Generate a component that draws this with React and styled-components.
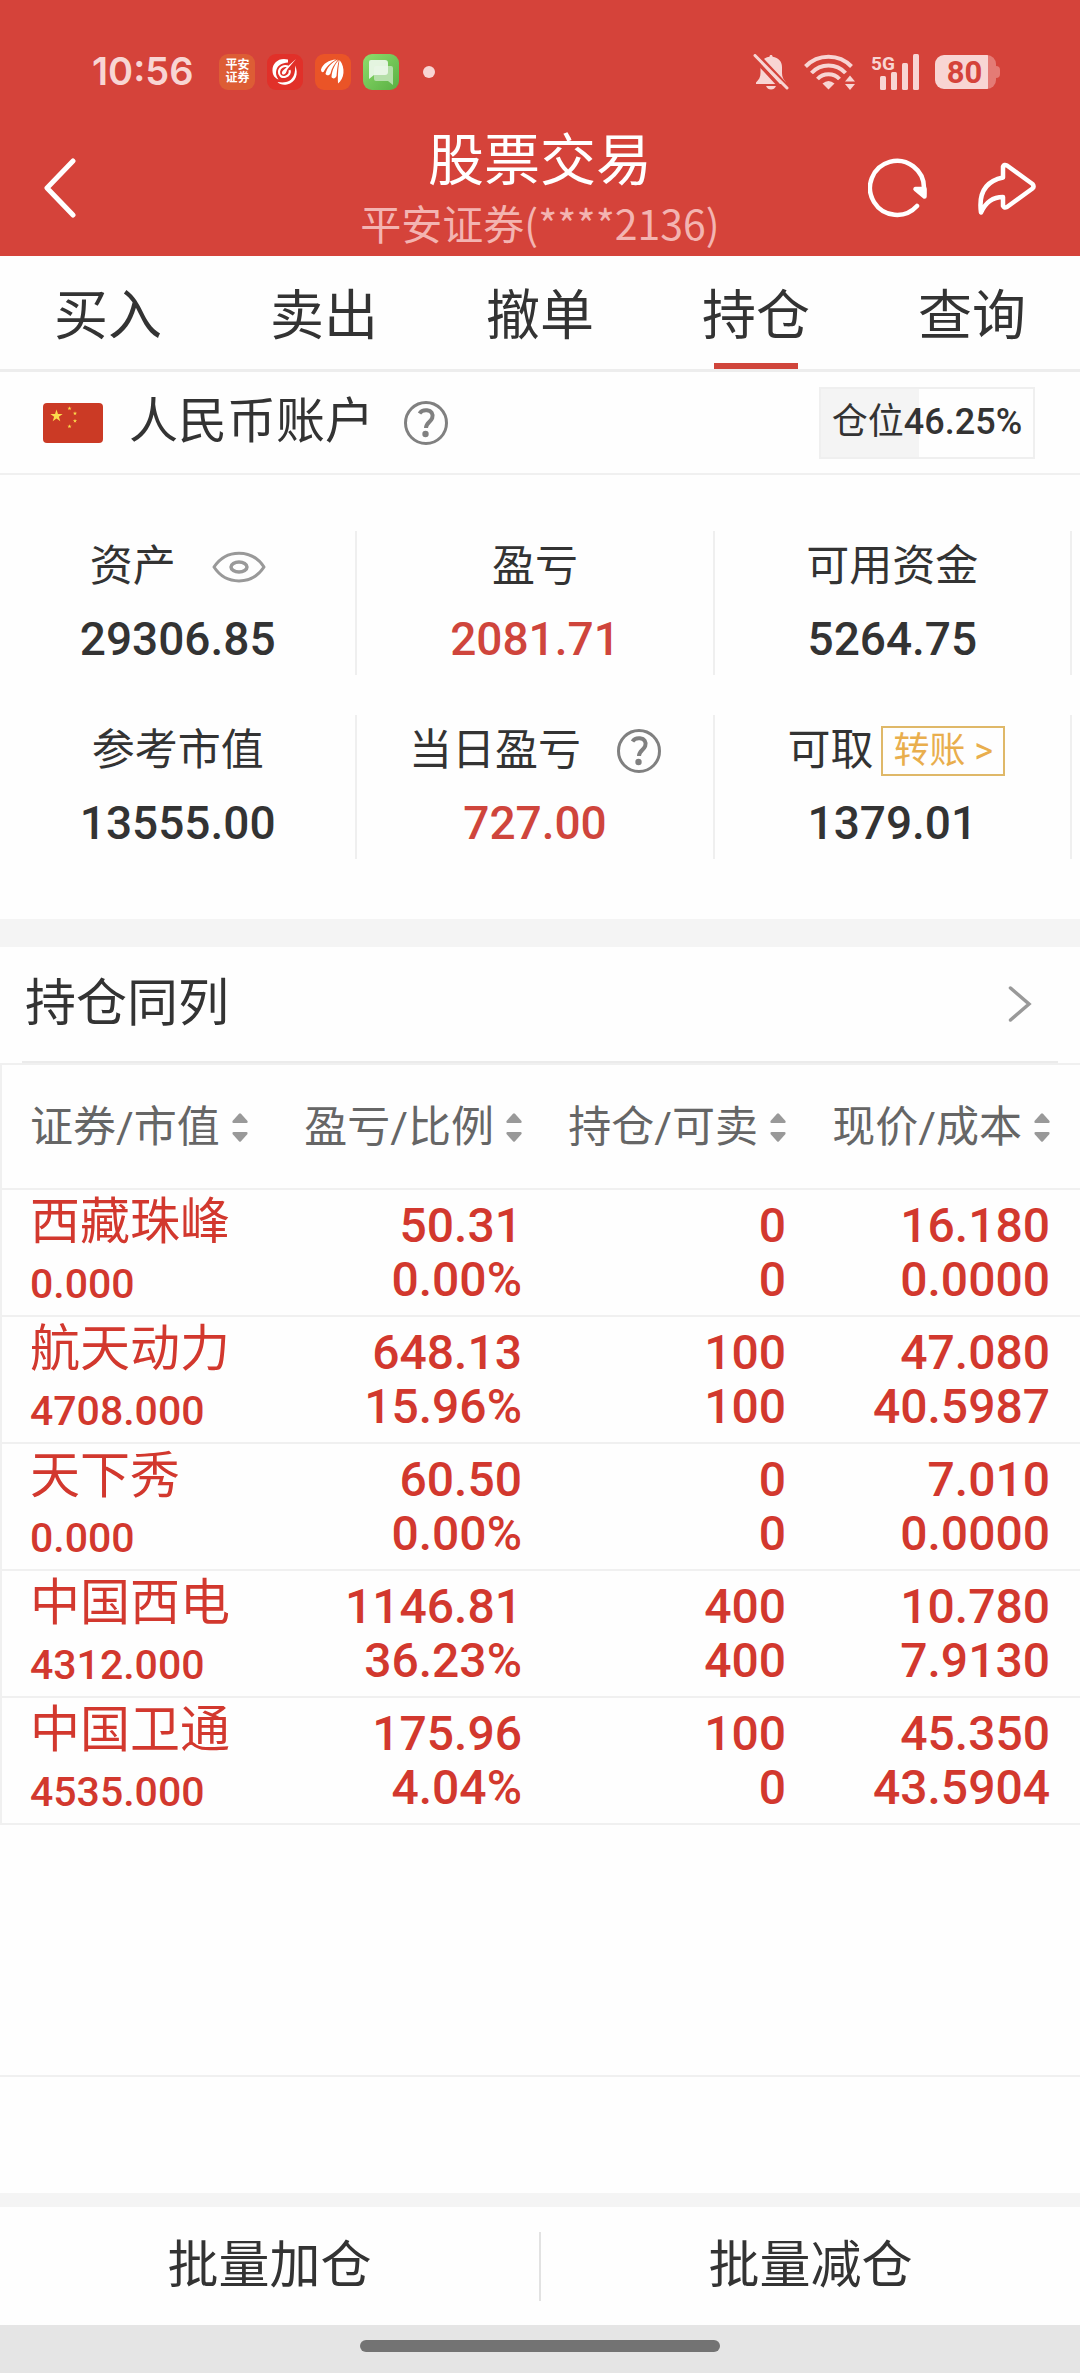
import { useState } from "react";
import styled, { createGlobalStyle } from "styled-components";

const GlobalStyle = createGlobalStyle`
  * {
    box-sizing: border-box;
  }
  body {
    margin: 0;
    background: #fefefe;
    color: #333;
    font-family: Roboto, "Noto Sans CJK SC", sans-serif;
    line-height: 1.2;
  }
  button {
    margin: 0;
    padding: 0;
    border: none;
    background: none;
    color: inherit;
    font-family: inherit;
    line-height: inherit;
    cursor: pointer;
  }
  svg {
    display: block;
    flex: none;
  }
`;

const Page = styled.div`
  display: flex;
  flex-direction: column;
  min-height: 100vh;
`;

const Header = styled.header`
  background: #d5433a;
  color: white;
`;

const StatusBar = styled.div`
  display: flex;
  align-items: center;
  justify-content: space-between;
  height: 120px;
  padding: 24px 80px 0 92px;
  color: #f8d5d3;
`;

const StatusGroup = styled.div`
  display: flex;
  align-items: center;
  gap: ${(props) => props.$gap}px;
`;

const Clock = styled.span`
  margin-right: 14px;
  font-family: Inter, sans-serif;
  font-size: 38px;
  font-weight: 600;
`;

const AppBadge = styled.span`
  display: flex;
  flex-direction: column;
  align-items: center;
  justify-content: center;
  width: 36px;
  height: 36px;
  border-radius: 9px;
  background: ${(props) => props.$bg};
  color: white;
  font-size: 12px;
  font-weight: 700;
  line-height: 13px;
`;

const Dot = styled.span`
  width: 12px;
  height: 12px;
  margin-left: 12px;
  border-radius: 50%;
  background: #f8d5d3;
`;

const Battery = styled.span`
  display: flex;
  align-items: center;
`;

const BatteryBody = styled.span`
  width: 61px;
  height: 34px;
  padding-right: 2px;
  border-radius: 9px;
  background: linear-gradient(to right, #f8d5d3 53px, #e47b75 53px);
  color: #d5433a;
  font-size: 31px;
  font-weight: 700;
  line-height: 36px;
  text-align: center;
`;

const BatteryTip = styled.span`
  width: 4px;
  height: 12px;
  border-radius: 0 4px 4px 0;
  background: #e47b75;
`;

const TitleBar = styled.div`
  display: grid;
  grid-template-columns: 1fr auto 1fr;
  align-items: center;
  height: 136px;
  padding: 0 44px;
`;

const TitleBlock = styled.div`
  padding-top: 8px;
  text-align: center;
`;

const Title = styled.h1`
  margin: 0;
  font-size: 56px;
  font-weight: 400;
  line-height: 60px;
`;

const Subtitle = styled.p`
  margin: 0;
  color: #f3b4b1;
  font-family: "Noto Sans CJK SC", sans-serif;
  font-size: 41px;
  line-height: 62px;
`;

const Actions = styled.div`
  display: flex;
  justify-content: flex-end;
  gap: 48px;
`;

const Tabs = styled.nav`
  display: flex;
  border-bottom: 3px solid #ededed;
`;

const Tab = styled.button`
  display: flex;
  flex: 1;
  flex-direction: column;
  align-items: center;
  justify-content: space-between;
  height: 113px;
  padding-top: 25px;
  font-size: 54px;
  line-height: 72px;

  &::after {
    content: "";
    width: 84px;
    height: 6px;
    background: ${(props) => (props.$active ? "#d0453b" : "transparent")};
  }
`;

const AccountRow = styled.div`
  display: flex;
  align-items: center;
  height: 103px;
  padding: 0 45px 0 43px;
  border-bottom: 2px solid #f0f0f0;
`;

const AccountName = styled.span`
  margin: 0 30px 0 26px;
  font-size: 49px;
`;

const PositionBox = styled.div`
  width: 216px;
  height: 72px;
  margin-left: auto;
  border: 2px solid #efefef;
  background: linear-gradient(
    to right,
    #f4f4f4 ${(props) => props.$percent}%,
    #fefefe ${(props) => props.$percent}%
  );
  font-size: 36px;
  line-height: 66px;
  text-align: center;
  white-space: nowrap;
`;

const Percent = styled.span`
  font-weight: 500;
`;

const Stats = styled.div`
  display: grid;
  grid-template-columns: repeat(3, 1fr);
  row-gap: 40px;
  padding: 56px 8px 60px 0;
`;

const Stat = styled.div`
  border-right: 2px solid #efefef;
`;

const StatLabel = styled.div`
  display: flex;
  align-items: center;
  justify-content: center;
  gap: 36px;
  height: 72px;
  font-size: 43px;
`;

const StatValue = styled.div`
  color: ${(props) => (props.$up ? "#cf453c" : "#333")};
  font-size: 46px;
  font-weight: 500;
  line-height: 72px;
  text-align: center;
`;

const TransferButton = styled.button`
  height: 50px;
  margin: 0 -8px 0 -28px;
  padding: 0 10px;
  border: 2px solid #dfb868;
  color: #e9ae4d;
  font-size: 36px;
  line-height: 46px;
  white-space: nowrap;
`;

const Band = styled.div`
  height: ${(props) => props.$height}px;
  background: #f4f4f4;
`;

const SectionHead = styled.button`
  display: flex;
  align-items: center;
  justify-content: space-between;
  height: 116px;
  margin: 0 22px;
  padding: 0 26px 0 3px;
  border-bottom: 2px solid #ebebeb;
  font-size: 51px;
`;

const Table = styled.table`
  width: 100%;
  border-collapse: separate;
  border-spacing: 0;
  border-top: 2px solid #f0f0f0;
  border-left: 2px solid #f0f0f0;
  table-layout: fixed;
`;

const HeadCell = styled.th`
  width: ${(props) => (props.$first ? "auto" : "264px")};
  height: 125px;
  padding: ${(props) => (props.$first ? "2px 0 0 28px" : "2px 30px 0 0")};
  border-bottom: 2px solid #f0f0f0;
  font-weight: 400;
`;

const SortButton = styled.button`
  display: flex;
  align-items: center;
  gap: 12px;
  margin-left: ${(props) => (props.$first ? "0" : "auto")};
  color: #666;
  font-size: 43px;
  white-space: nowrap;
`;

const Cell = styled.td`
  height: 127px;
  padding: ${(props) => (props.$first ? "0 0 0 28px" : "0 30px 0 0")};
  border-bottom: 2px solid #f0f0f0;
  color: #d2382e;
  font-size: 48px;
  font-weight: 500;
  line-height: 54px;
  text-align: ${(props) => (props.$first ? "left" : "right")};
`;

const StockName = styled.div`
  font-size: 50px;
  font-weight: 400;
  line-height: 62px;
`;

const StockValue = styled.div`
  font-size: 41px;
  line-height: 62px;
`;

const Rest = styled.div`
  flex: 1;
  border-bottom: 2px solid #f0f0f0;
`;

const Notice = styled.div`
  height: 116px;
`;

const Footer = styled.footer`
  display: flex;
  align-items: center;
  height: 118px;
`;

const FooterButton = styled.button`
  flex: 1;
  height: 69px;
  font-size: 51px;
  line-height: 66px;

  & + & {
    border-left: 2px solid #e2e2e2;
  }
`;

const HomeBar = styled.div`
  display: flex;
  justify-content: center;
  height: 48px;
  padding-top: 15px;
  background: #e5e5e5;

  &::after {
    content: "";
    width: 33.33%;
    height: 12px;
    border-radius: 6px;
    background: #737373;
  }
`;

const tabs = ["买入", "卖出", "撤单", "持仓", "查询"];

const columns = ["证券/市值", "盈亏/比例", "持仓/可卖", "现价/成本"];

const holdings = [
  { name: "西藏珠峰", value: "0.000", profit: "50.31", ratio: "0.00%", held: "0", sellable: "0", price: "16.180", cost: "0.0000" },
  { name: "航天动力", value: "4708.000", profit: "648.13", ratio: "15.96%", held: "100", sellable: "100", price: "47.080", cost: "40.5987" },
  { name: "天下秀", value: "0.000", profit: "60.50", ratio: "0.00%", held: "0", sellable: "0", price: "7.010", cost: "0.0000" },
  { name: "中国西电", value: "4312.000", profit: "1146.81", ratio: "36.23%", held: "400", sellable: "400", price: "10.780", cost: "7.9130" },
  { name: "中国卫通", value: "4535.000", profit: "175.96", ratio: "4.04%", held: "100", sellable: "0", price: "45.350", cost: "43.5904" },
];

const BellOffIcon = () => (
  <svg width="36" height="36" viewBox="0 0 36 36" fill="#f8d5d3">
    <path d="M18 1c1 0 1.600.7 1.600 1.700C25.500 3.500 29 7.500 29 13v6c0 4 1.500 6.500 4 9.500V30H3v-1.500c3-3 4.500-5.500 4.500-9.500v-6c0-5.500 3.200-9.500 9-10.300C16.500 1.700 17 1 18 1z" />
    <path d="M13 32h10c-1 2.500-2.800 3.500-5 3.500S14 34.500 13 32z" />
    <path d="M0 3.500 32 38M3-1l34 36" stroke="#d5433a" strokeWidth="3.500" />
    <path d="M0-4 0 6 8 12z" fill="#d5433a" />
    <path d="M2 1.500 34 34" stroke="#f8d5d3" strokeWidth="3" strokeLinecap="round" />
  </svg>
);

const WifiIcon = () => (
  <svg width="51" height="36" viewBox="0 0 51 36" fill="none" stroke="#f8d5d3" strokeWidth="4">
    <path d="M1.500 12.500a32 32 0 0 1 46 0M7.500 19a23 23 0 0 1 34 0M13.500 25a15 15 0 0 1 22 0" />
    <path d="M24.500 35.500 18.500 29.500q6-5 12 0z" fill="#f8d5d3" stroke="none" />
    <path d="M46 21.500l5 6H41zM46 36l5-6H41z" fill="#f8d5d3" stroke="none" />
  </svg>
);

const SignalIcon = () => (
  <svg width="50" height="40" viewBox="0 0 50 40" fill="#f8d5d3">
    <text x="1" y="18" fontFamily="Roboto, sans-serif" fontSize="19" fontWeight="700">5G</text>
    <rect x="10" y="24" width="6" height="14" rx="1.500" />
    <rect x="21" y="20" width="6" height="18" rx="1.500" />
    <rect x="32" y="11" width="6" height="27" rx="1.500" />
    <rect x="43" y="2" width="6" height="36" rx="1.500" />
  </svg>
);

const SwirlIcon = () => (
  <svg width="28" height="28" viewBox="0 0 28 28" fill="white">
    <path d="M17 1.500C8-1 1 5 1.500 13c.2 4.500 2.500 7 6 8.500C5 18 4.500 15 5.500 11.500 7 7 11 5 17 4.500z" />
    <path d="M24 7.500c4 8 1 17-8 19-4 .8-7.500-.2-9.500-2.500 8 1.500 14-.5 16.500-7 1-3 1.300-6 1-9.500z" />
    <path
      d="M17 8.500c-4-1.500-8.500.8-9 5-.4 4 3 6.300 6.500 5.200 3.500-1 5-4 4-6.500"
      fill="none"
      stroke="white"
      strokeWidth="2.200"
    />
    <path d="M25 1 12 12.500c-2 2-1 4.500 1 4 2.500-1 2-3 4-6z" />
  </svg>
);

const FeatherIcon = () => (
  <svg width="26" height="28" viewBox="0 0 26 28" fill="white">
    <path d="M16 1.500C9 2 3 5.500 1 11.500c0 2 1 3 2.500 2.500C6 9 10 5 16 1.500z" />
    <path d="M18 1.500C11 5 7 9.500 5.500 16c1.500 2 4 1.500 5-.5 1-5 4-9.500 7.500-14z" />
    <path d="M19 2c-4 4-7 10-7.500 17 1.500 2.500 4 1.500 5-1 .5-6 1-11 2.500-16z" />
    <path d="M19.500 2c-1 6-2 15-1.500 23.500C24 21 26 10 19.500 2z" />
  </svg>
);

const ChatIcon = () => (
  <svg width="36" height="36" viewBox="0 0 36 36">
    <path d="M13 12h15q2 0 2 2v17l-5-4H13q-2 0-2-2V14q0-2 2-2z" fill="#b5dfa9" />
    <path d="M8 6h14q3 0 3 3v9q0 3-3 3H11l-5 4V8q0-2 2-2z" fill="#ecf8e9" fillOpacity="0.93" />
  </svg>
);

const BackIcon = () => (
  <svg width="32" height="60" viewBox="0 0 32 60" fill="none" stroke="white" strokeWidth="5">
    <path d="M29 3 3 30 29 57" strokeLinecap="round" strokeLinejoin="round" />
  </svg>
);

const RefreshIcon = () => (
  <svg width="60" height="60" viewBox="0 0 60 60" fill="none" stroke="white" strokeWidth="4.500">
    <path d="M56 36V30A27 27 0 1 0 49 48" strokeLinecap="round" />
    <path d="M47.500 31h9v7.500z" fill="white" strokeLinejoin="round" />
  </svg>
);

const ShareIcon = () => (
  <svg width="60" height="60" viewBox="0 0 60 60" fill="none" stroke="white" strokeWidth="4.500">
    <path
      d="M27 8.500q1-2.500 4-1L56.500 26q2 2.500 0 4.500L31 49q-3 1.500-4-1v-9Q12 39 5 54.500 1 25 27 19.500z"
      strokeLinejoin="round"
    />
  </svg>
);

const FlagIcon = () => {
  const star = "M0-1 .225-.309H.951L.363.118.588.809 0 .382-.588.809-.363.118-.951-.309H-.225z";
  return (
    <svg width="60" height="40" viewBox="0 0 60 40" role="img" aria-label="中国">
      <rect width="60" height="40" rx="4" fill="#cb3a25" />
      <g fill="#fbdc4c">
        <path d={star} transform="translate(13.500 13) scale(6.500)" />
        <path d={star} transform="translate(26.500 5.500) scale(2.200)" />
        <path d={star} transform="translate(32 10.500) scale(2.200)" />
        <path d={star} transform="translate(32 18) scale(2.200)" />
        <path d={star} transform="translate(26.500 23.500) scale(2.200)" />
      </g>
    </svg>
  );
};

const HelpIcon = () => (
  <svg width="44" height="44" viewBox="0 0 44 44" fill="none" stroke="#808080">
    <circle cx="22" cy="22" r="20.500" strokeWidth="3" />
    <path d="M15.500 12.500c2-3 5-3.500 7.500-3.200 4.500.5 6.500 4 5.200 7.700-1.500 4-6.200 5-6.200 10" strokeWidth="4" />
    <circle cx="21.500" cy="33" r="3.200" fill="#808080" stroke="none" />
  </svg>
);

const EyeIcon = () => (
  <svg width="54" height="32" viewBox="0 0 54 32" fill="none" stroke="#999" strokeWidth="3">
    <path d="M2 16C14-2.500 40-2.500 52 16 40 34.500 14 34.500 2 16z" strokeLinejoin="round" />
    <ellipse cx="27" cy="16" rx="8" ry="5" strokeWidth="3.500" />
  </svg>
);

const ChevronIcon = () => (
  <svg width="24" height="36" viewBox="0 0 24 36" fill="none" stroke="#999" strokeWidth="3.500">
    <path d="M2.500 2 21 18 2.500 34" strokeLinecap="round" />
  </svg>
);

const SortIcon = () => (
  <svg width="16" height="30" viewBox="0 0 16 30" fill="#999">
    <path d="M7 .8q1-1 2 0L15.500 8q.5 2-1 2h-13q-1.500 0-1-2z" />
    <path d="M7 28.200q1 1 2 0L15.500 21q.5-2-1-2h-13q-1.500 0-1 2z" />
  </svg>
);

const App = () => {
  const [activeTab, setActiveTab] = useState("持仓");

  return (
    <>
      <GlobalStyle />
      <Page>
        <Header>
          <StatusBar>
            <StatusGroup $gap={12}>
              <Clock>10:56</Clock>
              <AppBadge $bg="#dd5d35">
                <span>平安</span>
                <span>证券</span>
              </AppBadge>
              <AppBadge $bg="#e13029">
                <SwirlIcon />
              </AppBadge>
              <AppBadge $bg="#ea5427">
                <FeatherIcon />
              </AppBadge>
              <AppBadge $bg="linear-gradient(135deg, #8fdc6c, #58b043)">
                <ChatIcon />
              </AppBadge>
              <Dot />
            </StatusGroup>
            <StatusGroup $gap={15}>
              <BellOffIcon />
              <WifiIcon />
              <SignalIcon />
              <Battery>
                <BatteryBody>80</BatteryBody>
                <BatteryTip />
              </Battery>
            </StatusGroup>
          </StatusBar>
          <TitleBar>
            <button aria-label="返回">
              <BackIcon />
            </button>
            <TitleBlock>
              <Title>股票交易</Title>
              <Subtitle>平安证券(****2136)</Subtitle>
            </TitleBlock>
            <Actions>
              <button aria-label="刷新">
                <RefreshIcon />
              </button>
              <button aria-label="分享">
                <ShareIcon />
              </button>
            </Actions>
          </TitleBar>
        </Header>

        <Tabs>
          {tabs.map((tab) => (
            <Tab key={tab} $active={tab === activeTab} onClick={() => setActiveTab(tab)}>
              {tab}
            </Tab>
          ))}
        </Tabs>

        <AccountRow>
          <FlagIcon />
          <AccountName>人民币账户</AccountName>
          <button aria-label="账户说明">
            <HelpIcon />
          </button>
          <PositionBox $percent={46.25}>
            仓位<Percent>46.25%</Percent>
          </PositionBox>
        </AccountRow>

        <Stats>
          <Stat>
            <StatLabel>
              资产
              <button aria-label="隐藏金额">
                <EyeIcon />
              </button>
            </StatLabel>
            <StatValue>29306.85</StatValue>
          </Stat>
          <Stat>
            <StatLabel>盈亏</StatLabel>
            <StatValue $up>2081.71</StatValue>
          </Stat>
          <Stat>
            <StatLabel>可用资金</StatLabel>
            <StatValue>5264.75</StatValue>
          </Stat>
          <Stat>
            <StatLabel>参考市值</StatLabel>
            <StatValue>13555.00</StatValue>
          </Stat>
          <Stat>
            <StatLabel>
              当日盈亏
              <button aria-label="当日盈亏说明">
                <HelpIcon />
              </button>
            </StatLabel>
            <StatValue $up>727.00</StatValue>
          </Stat>
          <Stat>
            <StatLabel>
              可取
              <TransferButton>转账 &gt;</TransferButton>
            </StatLabel>
            <StatValue>1379.01</StatValue>
          </Stat>
        </Stats>

        <Band $height={28} />
        <SectionHead>
          持仓同列
          <ChevronIcon />
        </SectionHead>

        <Table>
          <thead>
            <tr>
              {columns.map((column, i) => (
                <HeadCell key={column} $first={i === 0}>
                  <SortButton $first={i === 0}>
                    {column}
                    <SortIcon />
                  </SortButton>
                </HeadCell>
              ))}
            </tr>
          </thead>
          <tbody>
            {holdings.map((item) => (
              <tr key={item.name}>
                <Cell $first>
                  <StockName>{item.name}</StockName>
                  <StockValue>{item.value}</StockValue>
                </Cell>
                <Cell>
                  {item.profit}
                  <br />
                  {item.ratio}
                </Cell>
                <Cell>
                  {item.held}
                  <br />
                  {item.sellable}
                </Cell>
                <Cell>
                  {item.price}
                  <br />
                  {item.cost}
                </Cell>
              </tr>
            ))}
          </tbody>
        </Table>

        <Rest />
        <Notice />
        <Band $height={14} />
        <Footer>
          <FooterButton>批量加仓</FooterButton>
          <FooterButton>批量减仓</FooterButton>
        </Footer>
        <HomeBar />
      </Page>
    </>
  );
};

export default App;
